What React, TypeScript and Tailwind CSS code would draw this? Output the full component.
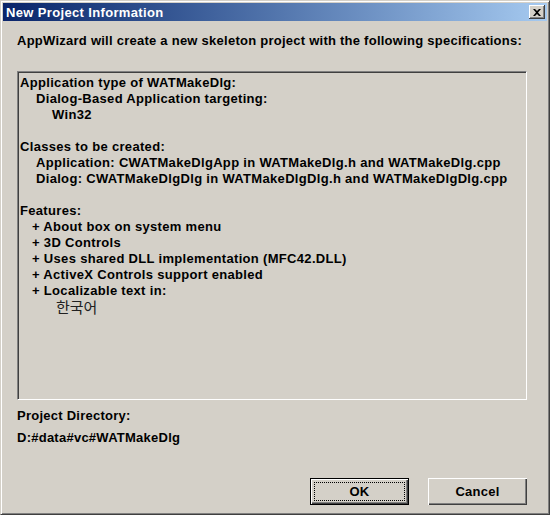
import React from 'react';

const font = { fontFamily: '"Liberation Sans", Arial, "Noto Sans CJK KR", sans-serif' };

const Line: React.FC<{ indent?: number; children?: React.ReactNode }> = ({ indent = 0, children }) => (
  <div className={`h-4 leading-4 whitespace-nowrap ${indent === 1 ? 'pl-4' : indent === 2 ? 'pl-8' : indent === 3 ? 'pl-3' : ''}`}>
    {children}
  </div>
);

export default function App() {
  return (
    <div
      className="w-[550px] h-[515px] bg-[#d4d0c8] flex flex-col text-black font-bold text-[13px] tracking-[0.25px] border border-t-[#d4d0c8] border-l-[#d4d0c8] border-r-[#404040] border-b-[#404040] shadow-[inset_1px_1px_0_#ffffff,inset_-1px_-1px_0_#808080] p-[2px]"
      style={font}
    >
      {/* title bar */}
      <div className="h-[18px] flex items-center justify-between pl-[3px] pr-[2px] bg-gradient-to-r from-[#0a246a] to-[#a6caf0]">
        <span className="text-white text-[13px] tracking-[0.35px] font-bold leading-none">New Project Information</span>
        <button className="w-4 h-[14px] bg-[#d4d0c8] flex items-center justify-center shadow-[inset_-1px_-1px_0_#404040,inset_1px_1px_0_#ffffff,inset_-2px_-2px_0_#808080]">
          <svg width="8" height="7" viewBox="0 0 8 7">
            <path d="M0 0h2l2 2 2-2h2L5 3.5 8 7H6L4 5 2 7H0l3-3.5z" fill="#000" />
          </svg>
        </button>
      </div>

      <div className="flex-1 flex flex-col pl-[14px] pr-[20px]">
        <div className="mt-[12px] leading-4 whitespace-nowrap">
          AppWizard will create a new skeleton project with the following specifications:
        </div>

        <div className="mt-[22px] h-[329px] border border-t-[#808080] border-l-[#808080] border-r-white border-b-white shadow-[inset_1px_1px_0_#404040] pl-[2px] pt-[3px] tracking-[0.32px]">
          <Line>Application type of WATMakeDlg:</Line>
          <Line indent={1}>Dialog-Based Application targeting:</Line>
          <Line indent={2}>Win32</Line>
          <Line />
          <Line>Classes to be created:</Line>
          <Line indent={1}>Application: CWATMakeDlgApp in WATMakeDlg.h and WATMakeDlg.cpp</Line>
          <Line indent={1}>Dialog: CWATMakeDlgDlg in WATMakeDlgDlg.h and WATMakeDlgDlg.cpp</Line>
          <Line />
          <Line>Features:</Line>
          <Line indent={3}>+ About box on system menu</Line>
          <Line indent={3}>+ 3D Controls</Line>
          <Line indent={3}>+ Uses shared DLL implementation (MFC42.DLL)</Line>
          <Line indent={3}>+ ActiveX Controls support enabled</Line>
          <Line indent={3}>+ Localizable text in:</Line>
          <div className="h-4 leading-4 pl-9 font-normal text-[15px] tracking-normal text-[#202020]" style={{ fontFamily: '"Noto Sans CJK KR", sans-serif' }}>
            한국어
          </div>
        </div>

        <div className="mt-[8px] leading-4">Project Directory:</div>
        <div className="mt-[6px] leading-4">D:#data#vc#WATMakeDlg</div>

        <div className="mt-auto mb-[7px] flex justify-end gap-[19px]">
          <button className="w-[99px] h-[27px] border border-black bg-[#d4d0c8] p-[3px] shadow-[inset_1px_1px_0_#ffffff,inset_-1px_-1px_0_#404040,inset_-2px_-2px_0_#808080]">
            <div className="w-full h-full border border-dotted border-black flex items-center justify-center font-bold">
              OK
            </div>
          </button>
          <button className="w-[99px] h-[27px] bg-[#d4d0c8] flex items-center justify-center font-bold shadow-[inset_1px_1px_0_#ffffff,inset_-1px_-1px_0_#404040,inset_-2px_-2px_0_#808080]">
            Cancel
          </button>
        </div>
      </div>
    </div>
  );
}
